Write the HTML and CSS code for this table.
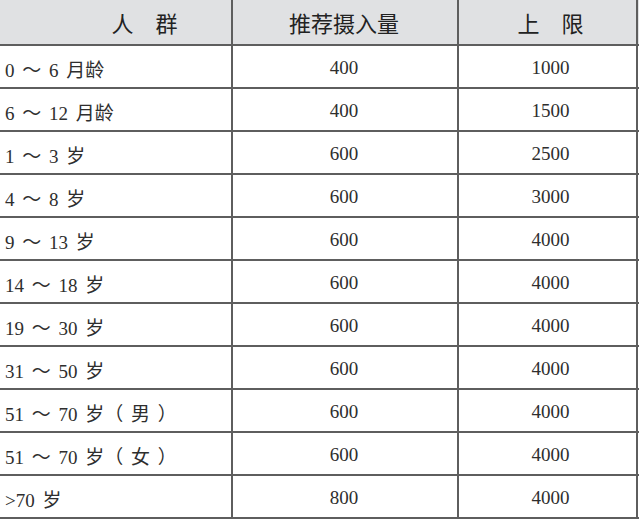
FILE: index.html
```html
<!DOCTYPE html>
<html lang="zh">
<head>
<meta charset="utf-8">
<title>推荐摄入量</title>
<link rel="stylesheet" href="styles.css">
</head>
<body>
<div class="table">
  <div class="row head">
    <div class="cell c1 hc1">人　群</div>
    <div class="cell c2">推荐摄入量</div>
    <div class="cell c3">上　限</div>
  </div>
  <div class="row"><div class="cell c1">0 ～ 6 月龄</div><div class="cell c2">400</div><div class="cell c3">1000</div></div>
  <div class="row"><div class="cell c1">6 ～ 12 月龄</div><div class="cell c2">400</div><div class="cell c3">1500</div></div>
  <div class="row"><div class="cell c1">1 ～ 3 岁</div><div class="cell c2">600</div><div class="cell c3">2500</div></div>
  <div class="row"><div class="cell c1">4 ～ 8 岁</div><div class="cell c2">600</div><div class="cell c3">3000</div></div>
  <div class="row"><div class="cell c1">9 ～ 13 岁</div><div class="cell c2">600</div><div class="cell c3">4000</div></div>
  <div class="row"><div class="cell c1">14 ～ 18 岁</div><div class="cell c2">600</div><div class="cell c3">4000</div></div>
  <div class="row"><div class="cell c1">19 ～ 30 岁</div><div class="cell c2">600</div><div class="cell c3">4000</div></div>
  <div class="row"><div class="cell c1">31 ～ 50 岁</div><div class="cell c2">600</div><div class="cell c3">4000</div></div>
  <div class="row"><div class="cell c1">51 ～ 70 岁（ 男 ）</div><div class="cell c2">600</div><div class="cell c3">4000</div></div>
  <div class="row"><div class="cell c1">51 ～ 70 岁（ 女 ）</div><div class="cell c2">600</div><div class="cell c3">4000</div></div>
  <div class="row"><div class="cell c1">&gt;70 岁</div><div class="cell c2">800</div><div class="cell c3">4000</div></div>
</div>
</body>
</html>
```
FILE: styles.css
```css
html, body {
  margin: 0;
  padding: 0;
  background: #ffffff;
}
.table {
  width: 639px;
  display: flex;
  flex-direction: column;
  font-family: "Liberation Serif", "Noto Sans CJK SC", serif;
  font-size: 19px;
  color: #2e2e2e;
}
.row {
  display: grid;
  grid-template-columns: 233px 226px 179px;
  height: 43px;
  border-bottom: 2px solid #5e5e5e;
  box-sizing: border-box;
}
.head {
  height: 46px;
  background: #e0e1e3;
  font-family: "Noto Sans CJK SC", "Liberation Sans", sans-serif;
  font-size: 22px;
  color: #222;
}
.cell {
  display: flex;
  align-items: center;
  border-right: 2px solid #5e5e5e;
  box-sizing: border-box;
  padding-top: 3px;
  white-space: pre;
}
.head .cell {
  padding-top: 0;
}
.c1 {
  padding-left: 5px;
  word-spacing: 3px;
}
.hc1 {
  justify-content: center;
  padding-left: 58px;
}
.c2, .c3 {
  justify-content: center;
}
.c2 {
  padding-right: 2px;
}
.c3 {
  padding-left: 6px;
}
```
